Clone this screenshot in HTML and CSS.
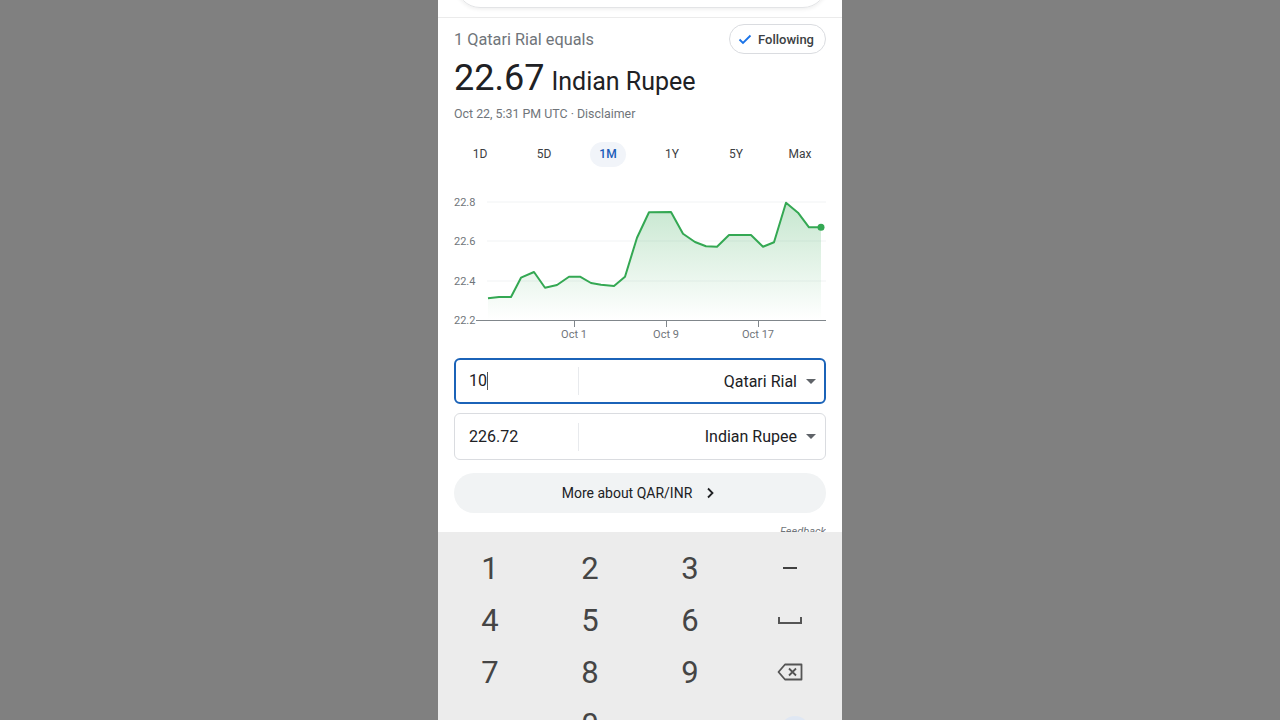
FILE: index.html
```html
<!DOCTYPE html>
<html>

<head>
    <meta charset="UTF-8" />
    <title>Qatari Rial to Indian Rupee</title>
    <link rel="stylesheet" href="styles.css">
</head>

<body>
    <div class="phone">
        <div class="search-strip">
            <div class="search-box"></div>
        </div>

        <div class="content">
            <div class="title-row">
                <span class="equals">1 Qatari Rial equals</span>
                <button class="follow-chip">
                    <svg width="16" height="16" viewBox="0 0 16 16">
                        <path d="M2.5 8.5 L6 12 L13.5 4.5" fill="none" stroke="#1a73e8" stroke-width="1.8" />
                    </svg>
                    Following
                </button>
            </div>

            <div class="rate-row">
                <span class="rate">22.67</span>
                <span class="rate-unit">Indian Rupee</span>
            </div>
            <div class="stamp">Oct 22, 5:31 PM UTC · Disclaimer</div>

            <div class="tabs">
                <span class="tab">1D</span>
                <span class="tab">5D</span>
                <span class="tab active">1M</span>
                <span class="tab">1Y</span>
                <span class="tab">5Y</span>
                <span class="tab">Max</span>
            </div>

            <svg class="chart" width="372" height="155" viewBox="0 0 372 155">
                <defs>
                    <linearGradient id="fill" x1="0" y1="0" x2="0" y2="1">
                        <stop offset="0" stop-color="#34a853" stop-opacity="0.28" />
                        <stop offset="1" stop-color="#34a853" stop-opacity="0" />
                    </linearGradient>
                </defs>
                <line x1="33" y1="11" x2="372" y2="11" stroke="#f1f3f4" />
                <line x1="33" y1="50" x2="372" y2="50" stroke="#f1f3f4" />
                <line x1="33" y1="90" x2="372" y2="90" stroke="#f1f3f4" />
                <text class="axis" x="0" y="15">22.8</text>
                <text class="axis" x="0" y="54">22.6</text>
                <text class="axis" x="0" y="94">22.4</text>
                <text class="axis" x="0" y="133">22.2</text>
                <polygon fill="url(#fill)"
                    points="34,107.3 45,106 57,106 67,86.7 80,81 91,96.7 103,94 115,85.7 126,85.7 137,92 147,93.7 160,95 171,85.7 183,46.7 195,21.3 217,21 229,42.7 241,51 252,55.3 263,55.7 275,44 297,44 309,55.7 320,51.3 332,11.7 344,21.7 355,36.3 367,36.3 367,129 34,129" />
                <polyline fill="none" stroke="#34a853" stroke-width="2" stroke-linejoin="round"
                    points="34,107.3 45,106 57,106 67,86.7 80,81 91,96.7 103,94 115,85.7 126,85.7 137,92 147,93.7 160,95 171,85.7 183,46.7 195,21.3 217,21 229,42.7 241,51 252,55.3 263,55.7 275,44 297,44 309,55.7 320,51.3 332,11.7 344,21.7 355,36.3 367,36.3" />
                <circle cx="367" cy="36.3" r="3.5" fill="#34a853" />
                <line x1="22" y1="129.5" x2="372" y2="129.5" stroke="#80868b" />
                <line x1="120.5" y1="129" x2="120.5" y2="136" stroke="#80868b" />
                <line x1="212.5" y1="129" x2="212.5" y2="136" stroke="#80868b" />
                <line x1="304.5" y1="129" x2="304.5" y2="136" stroke="#80868b" />
                <text class="axis" x="120" y="147" text-anchor="middle">Oct 1</text>
                <text class="axis" x="212" y="147" text-anchor="middle">Oct 9</text>
                <text class="axis" x="304" y="147" text-anchor="middle">Oct 17</text>
            </svg>

            <div class="field focused">
                <div class="amount">10<span class="caret"></span></div>
                <div class="currency">Qatari Rial <span class="drop"></span></div>
            </div>
            <div class="field">
                <div class="amount">226.72</div>
                <div class="currency">Indian Rupee <span class="drop"></span></div>
            </div>

            <button class="more-btn">
                More about QAR/INR
                <svg width="16" height="16" viewBox="0 0 16 16">
                    <path d="M6 3.5 L10.5 8 L6 12.5" fill="none" stroke="#202124" stroke-width="1.8" />
                </svg>
            </button>

            <div class="feedback"><span>Feedback</span></div>
        </div>

        <div class="keyboard">
            <span class="key">1</span>
            <span class="key">2</span>
            <span class="key">3</span>
            <span class="key"><span class="minus"></span></span>
            <span class="key">4</span>
            <span class="key">5</span>
            <span class="key">6</span>
            <span class="key">
                <svg width="24" height="10" viewBox="0 0 24 10">
                    <path d="M1 2 V8 H23 V2" fill="none" stroke="#555" stroke-width="2" />
                </svg>
            </span>
            <span class="key">7</span>
            <span class="key">8</span>
            <span class="key">9</span>
            <span class="key">
                <svg width="26" height="18" viewBox="0 0 26 18">
                    <path d="M8 1.5 H24.5 V16.5 H8 L1.5 9 Z" fill="none" stroke="#555" stroke-width="1.8" stroke-linejoin="round" />
                    <path d="M12 5.5 L19 12.5 M19 5.5 L12 12.5" stroke="#555" stroke-width="1.8" />
                </svg>
            </span>
            <span class="key"></span>
            <span class="key">0</span>
            <span class="key"></span>
            <span class="key"><span class="done"></span></span>
        </div>
    </div>
</body>

</html>
```

FILE: styles.css
```css
html,
body {
    margin: 0;
    height: 720px;
    overflow: hidden;
}

body {
    background-color: #808080;
    font-family: Roboto, "Noto Sans", Arial, sans-serif;
}

.phone {
    width: 404px;
    height: 720px;
    margin: 0 auto;
    background-color: white;
    display: flex;
    flex-direction: column;
    overflow: hidden;
}

.search-strip {
    flex-shrink: 0;
    height: 17px;
    border-bottom: 1px solid #ebebeb;
    padding: 0 15px 0 18px;
    overflow: hidden;
}

.search-box {
    height: 46px;
    margin-top: -40px;
    border: 1px solid #e3e4e6;
    border-radius: 24px;
    box-shadow: 0 1px 4px rgba(0, 0, 0, 0.08);
}

.content {
    flex-shrink: 0;
    padding: 0 16px;
}

.title-row {
    display: flex;
    justify-content: space-between;
    align-items: center;
    margin-top: 6px;
}

.equals {
    font-size: 16.3px;
    color: #70757a;
}

.follow-chip {
    display: flex;
    align-items: center;
    gap: 5px;
    height: 30px;
    padding: 0 11px 0 7px;
    border: 1px solid #dadce0;
    border-radius: 15px;
    background-color: white;
    font-family: inherit;
    font-size: 13px;
    font-weight: 500;
    color: #3c4043;
}

.rate-row {
    display: flex;
    align-items: baseline;
    gap: 7px;
    margin-top: 4px;
    line-height: 40px;
    color: #202124;
}

.rate {
    font-size: 36px;
}

.rate-unit {
    font-size: 25px;
}

.stamp {
    margin-top: 4px;
    font-size: 12.4px;
    line-height: 16px;
    color: #70757a;
}

.tabs {
    display: grid;
    grid-template-columns: repeat(6, 1fr);
    margin: 20px -6px 0;
}

.tab {
    justify-self: center;
    padding: 0 9px;
    line-height: 25px;
    border-radius: 13px;
    font-size: 12px;
    color: #3c4043;
}

.tab.active {
    background-color: #f1f4f9;
    color: #1a5cb8;
    font-weight: 500;
}

.chart {
    display: block;
    margin-top: 24px;
}

.axis {
    font-family: Roboto, Arial, sans-serif;
    font-size: 11px;
    fill: #70757a;
}

.field {
    display: flex;
    align-items: center;
    height: 45px;
    margin-top: 12px;
    border: 1px solid #dadce0;
    border-radius: 6px;
    font-size: 16px;
    color: #202124;
}

.field+.field {
    margin-top: 9px;
}

.field.focused {
    border: 2px solid #1b63b8;
    height: 42px;
}

.amount {
    width: 109px;
    padding-left: 14px;
    border-right: 1px solid #e8eaed;
    line-height: 28px;
    display: flex;
    align-items: center;
}

.focused .amount {
    padding-left: 13px;
}

.caret {
    display: inline-block;
    width: 1px;
    height: 18px;
    background-color: #555;
}

.currency {
    flex: 1;
    display: flex;
    justify-content: flex-end;
    align-items: center;
    gap: 9px;
    padding-right: 9px;
}

.focused .currency {
    padding-right: 8px;
}

.drop {
    width: 0;
    height: 0;
    border-left: 5px solid transparent;
    border-right: 5px solid transparent;
    border-top: 5px solid #5f6368;
}

.more-btn {
    display: flex;
    justify-content: center;
    align-items: center;
    gap: 10px;
    width: 100%;
    height: 40px;
    margin-top: 13px;
    border: none;
    border-radius: 20px;
    background-color: #f1f3f4;
    font-family: inherit;
    font-size: 14px;
    color: #202124;
}

.feedback {
    height: 19px;
    overflow: hidden;
    text-align: right;
}

.feedback span {
    display: inline-block;
    padding-top: 12px;
    font-size: 11px;
    font-style: italic;
    color: #70757a;
}

.keyboard {
    flex: 1 0 auto;
    display: grid;
    grid-template-columns: repeat(4, 100px);
    grid-auto-rows: 52px;
    padding: 10px 2px 0;
    background-color: #ececec;
}

.key {
    display: flex;
    justify-content: center;
    align-items: center;
    font-size: 31px;
    color: #454545;
}

.minus {
    width: 14px;
    height: 2px;
    background-color: #404040;
}

.done {
    width: 30px;
    height: 30px;
    margin-left: 10px;
    margin-top: 14px;
    border-radius: 50%;
    background-color: #dfe7f3;
}
```
